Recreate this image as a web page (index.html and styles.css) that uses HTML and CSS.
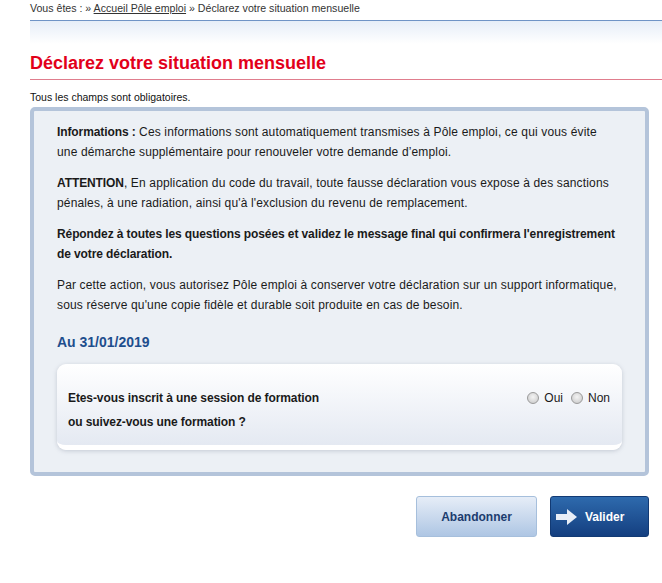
FILE: index.html
```html
<!DOCTYPE html>
<html lang="fr">
<head>
<meta charset="utf-8">
<title>Déclarez votre situation mensuelle</title>
<link rel="stylesheet" href="styles.css">
</head>
<body>
<div class="page">
  <div class="breadcrumb">Vous êtes : » <a href="#">Accueil Pôle emploi</a> » Déclarez votre situation mensuelle</div>
  <div class="topband"></div>
  <h1 class="title">Déclarez votre situation mensuelle</h1>
  <p class="required">Tous les champs sont obligatoires.</p>
  <div class="box">
    <p class="para"><strong>Informations :</strong> Ces informations sont automatiquement transmises à Pôle emploi, ce qui vous évite<br>une démarche supplémentaire pour renouveler votre demande d’emploi.</p>
    <p class="para"><strong>ATTENTION</strong>, En application du code du travail, toute fausse déclaration vous expose à des sanctions<br>pénales, à une radiation, ainsi qu'à l'exclusion du revenu de remplacement.</p>
    <p class="para"><strong>Répondez à toutes les questions posées et validez le message final qui confirmera l'enregistrement<br>de votre déclaration.</strong></p>
    <p class="para">Par cette action, vous autorisez Pôle emploi à conserver votre déclaration sur un support informatique,<br>sous réserve qu'une copie fidèle et durable soit produite en cas de besoin.</p>
    <h2 class="date">Au 31/01/2019</h2>
    <div class="card">
      <div class="question">Etes-vous inscrit à une session de formation<br>ou suivez-vous une formation ?</div>
      <div class="choices">
        <label class="choice"><span class="radio"></span>Oui</label>
        <label class="choice"><span class="radio"></span>Non</label>
      </div>
    </div>
  </div>
  <div class="actions">
    <button class="btn btn-cancel" type="button">Abandonner</button>
    <button class="btn btn-ok" type="button"><svg class="arrow" width="22" height="16" viewBox="0 0 22 16"><path d="M0 5 H11 V0 L21 8 L11 16 V11 H0 Z" fill="#e8eef7"/></svg>Valider</button>
  </div>
</div>
</body>
</html>
```
FILE: styles.css
```css
html, body {
  margin: 0;
  padding: 0;
  background: #fff;
}
body {
  font-family: "Liberation Sans", Arial, sans-serif;
  color: #1a1a1a;
}
.page {
  padding-left: 30px;
}
.breadcrumb {
  font-size: 10.6px;
  line-height: 13px;
  padding-top: 2px;
  color: #333;
  height: 18px;
}
.breadcrumb a {
  color: #333;
  text-decoration: underline;
}
.topband {
  height: 23px;
  border-top: 1px solid #6f94c6;
  background: linear-gradient(#e6eef8, #ffffff);
}
.title {
  margin: 0;
  padding-top: 8px;
  height: 27px;
  line-height: 22px;
  font-size: 18px;
  font-weight: bold;
  color: #e2001a;
  border-bottom: 1px solid #e07d8d;
}
.required {
  margin: 0;
  padding-top: 11px;
  font-size: 10.5px;
  line-height: 13px;
  color: #111;
}
.box {
  margin-top: 3px;
  width: 619px;
  border: 4px solid #b4c4da;
  border-radius: 5px;
  background: #ecf0f5;
  padding: 11px 23px 22px 23px;
  box-sizing: border-box;
}
.para {
  margin: 0 0 11px 0;
  font-size: 12px;
  line-height: 20px;
  letter-spacing: 0.15px;
  white-space: nowrap;
}
.para strong {
  font-weight: bold;
  letter-spacing: -0.1px;
}
.date {
  margin: 18px 0 13px 0;
  font-size: 14px;
  line-height: 18px;
  color: #1e4e8d;
  font-weight: bold;
}
.card {
  display: flex;
  justify-content: space-between;
  align-items: flex-start;
  background: linear-gradient(#ffffff, #e4e9f2);
  border-radius: 9px;
  border-bottom: 5px solid #ffffff;
  box-shadow: 0 1px 4px rgba(120, 130, 150, 0.35);
  padding: 23px 12px 12px 11px;
  height: 86px;
  box-sizing: border-box;
}
.question {
  font-size: 12px;
  font-weight: bold;
  line-height: 24px;
  letter-spacing: -0.1px;
  margin-top: -1px;
}
.choices {
  display: flex;
  gap: 8px;
  font-size: 12px;
  line-height: 24px;
  margin-top: -1px;
}
.choice {
  display: flex;
  align-items: center;
  gap: 5px;
}
.radio {
  width: 12px;
  height: 12px;
  border-radius: 50%;
  border: 1px solid #9a9a9a;
  background: radial-gradient(circle at 50% 40%, #f4f4f4, #c6c6c6);
  box-sizing: border-box;
}
.actions {
  display: flex;
  justify-content: flex-end;
  gap: 13px;
  width: 619px;
  margin-top: 20px;
}
.btn {
  height: 41px;
  border-radius: 3px;
  font-family: "Liberation Sans", Arial, sans-serif;
  font-size: 12px;
  font-weight: bold;
  cursor: pointer;
  display: flex;
  align-items: center;
  justify-content: center;
}
.btn-cancel {
  width: 121px;
  color: #1c3c6e;
  border: 1px solid #a6bfdc;
  background: linear-gradient(#e6edf7, #aec6e4);
}
.btn-ok {
  width: 99px;
  color: #fff;
  border: 1px solid #123a74;
  background: linear-gradient(#2e6aad, #143f80);
  justify-content: flex-start;
  padding-left: 5px;
  gap: 7px;
}
.arrow {
  display: block;
}
```
